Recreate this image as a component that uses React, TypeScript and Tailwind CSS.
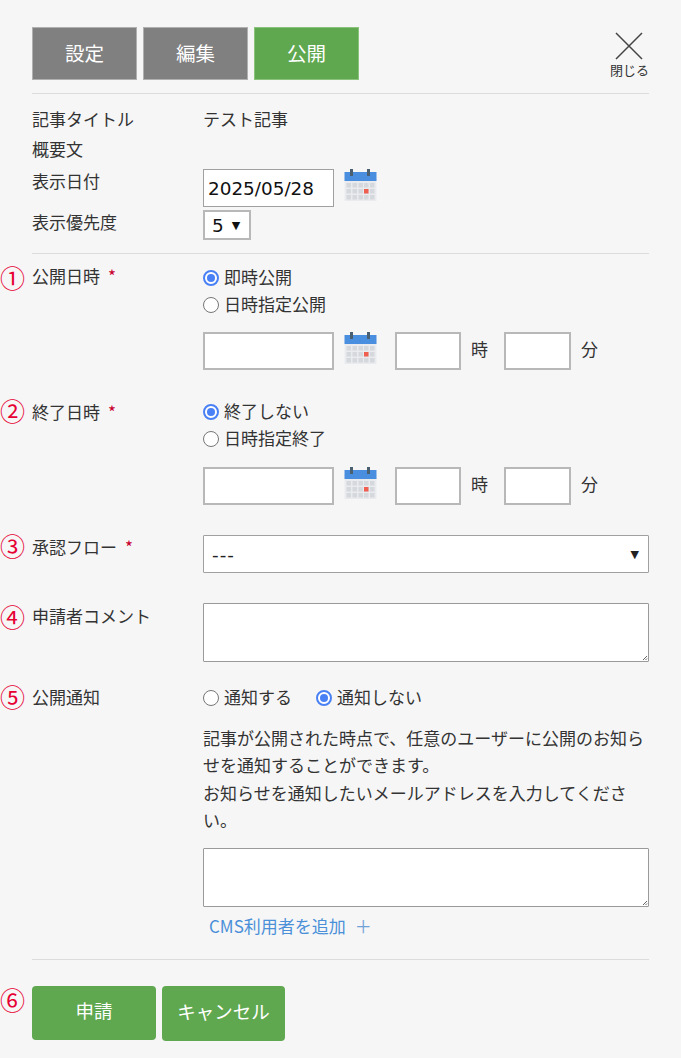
import React from 'react';

const FONT = "font-['Noto_Sans_CJK_JP','Noto_Sans',sans-serif]";
const FIELD_FONT = "font-['DejaVu_Sans',sans-serif]";

function CalendarIcon(): React.ReactNode {
  const cols = [2.5, 8.5, 14.5, 20, 26];
  const rows = [14, 20, 26];
  return (
    <svg width="33" height="33" viewBox="0 0 33 33" className="shrink-0">
      <rect x="0.5" y="8" width="32" height="24" fill="#e9ebee" />
      {rows.map((y) =>
        cols.map((x) => <rect key={`${x}-${y}`} x={x} y={y} width="4.5" height="4.5" fill="#d5d8dc" />)
      )}
      <rect x="0.5" y="3" width="32" height="9" fill="#4a8ee0" />
      <rect x="6" y="0" width="3" height="7" fill="#4a5f70" />
      <rect x="23" y="0" width="3" height="7" fill="#4a5f70" />
      <rect x="20" y="20" width="4.5" height="4.5" fill="#ee5f50" />
    </svg>
  );
}

function Mark({ n, className }: { n: string; className: string }): React.ReactNode {
  return <span className={`absolute -left-[32px] text-[25px] leading-[30px] text-[#e60033] ${className}`}>{n}</span>;
}

function Required(): React.ReactNode {
  return <span className="ml-2 text-[#c8002d]">*</span>;
}

function Radio({ checked, label }: { checked?: boolean; label: string }): React.ReactNode {
  return (
    <label className="flex items-center gap-[5px]">
      {checked ? (
        <span className="flex h-4 w-4 items-center justify-center rounded-full border-2 border-[#4a80f5] bg-white">
          <span className="h-2 w-2 rounded-full bg-[#4a80f5]" />
        </span>
      ) : (
        <span className="h-4 w-4 rounded-full border-[1.5px] border-[#767676] bg-white" />
      )}
      <span className="-translate-y-px">{label}</span>
    </label>
  );
}

function DateTimeInputs({ className }: { className: string }): React.ReactNode {
  return (
    <div className={`flex items-start ${className}`}>
      <div className="h-[38px] w-[131px] border-2 border-[#b8b8b8] bg-white" />
      <div className="ml-[10px]">
        <CalendarIcon />
      </div>
      <div className="ml-[18px] h-[38px] w-[66px] border-2 border-[#b8b8b8] bg-white" />
      <span className="ml-[10px] mt-[3px] w-[33px]">時</span>
      <div className="h-[38px] w-[67px] border-2 border-[#b8b8b8] bg-white" />
      <span className="ml-[10px] mt-[3px]">分</span>
    </div>
  );
}

function Row({ label, mark, markClass, labelClass, required, className, children }: {
  label: string;
  mark?: string;
  markClass?: string;
  labelClass?: string;
  required?: boolean;
  className?: string;
  children?: React.ReactNode;
}): React.ReactNode {
  return (
    <div className={`relative flex ${className ?? ''}`}>
      {mark && <Mark n={mark} className={markClass ?? ''} />}
      <div className={`w-[171px] shrink-0 ${labelClass ?? ''}`}>
        {label}
        {required && <Required />}
      </div>
      <div className="min-w-0 flex-1">{children}</div>
    </div>
  );
}

function Textarea(): React.ReactNode {
  return (
    <div className="relative h-[59px] w-full rounded-[1px] border border-[#9a9a9a] bg-white">
      <svg width="6" height="6" viewBox="0 0 6 6" className="absolute bottom-0 right-0">
        <path d="M1 5L5 1M3.5 5L5 3.5" stroke="#666" strokeWidth="1" />
      </svg>
    </div>
  );
}

export default function App(): React.ReactNode {
  return (
    <div className={`h-[1058px] w-[681px] overflow-hidden bg-[#f6f6f6] pl-8 pr-8 pt-[27px] text-[17px] leading-[27px] text-[#333] ${FONT}`}>
      <div className="flex items-start justify-between border-b border-[#dcdcdc] pb-[13px]">
        <div className="flex gap-[6px] text-[19.5px] text-white">
          <div className="flex h-[53px] w-[105px] items-center justify-center border border-[#b0b0b0] bg-[#808080] pb-[3px]">設定</div>
          <div className="flex h-[53px] w-[105px] items-center justify-center border border-[#b0b0b0] bg-[#808080] pb-[3px]">編集</div>
          <div className="flex h-[53px] w-[105px] items-center justify-center border border-[#8cc37c] bg-[#5fa850] pb-[3px]">公開</div>
        </div>
        <div className="flex flex-col items-center pt-[4px]">
          <svg width="30" height="30" viewBox="0 0 30 30">
            <path d="M2 2L28 28M28 2L2 28" stroke="#444" strokeWidth="1.5" />
          </svg>
          <span className="text-[13px] leading-[18px]">閉じる</span>
        </div>
      </div>

      <div className="border-b border-[#dcdcdc] pb-[13px] pt-[11px]">
        <Row label="記事タイトル">テスト記事</Row>
        <Row label="概要文" className="mt-[3px]" />
        <Row label="表示日付" labelClass="mt-[1px]" className="mt-[4px]">
          <div className="mt-[3px] flex items-start">
            <div className={`flex h-[38px] w-[131px] items-center border border-[#a0a0a0] bg-white pl-[4px] text-[18.4px] text-[#111] ${FIELD_FONT}`}>2025/05/28</div>
            <div className="ml-[10px]"><CalendarIcon /></div>
          </div>
        </Row>
        <Row label="表示優先度" labelClass="-mt-[2px]" className="mt-[3px]">
          <div className={`flex h-[30px] w-[48px] items-center border-2 border-[#b8b8b8] bg-white pl-[7px] text-[18.4px] text-[#111] ${FIELD_FONT}`}>
            5<span className="ml-[8px] text-[11px]">▼</span>
          </div>
        </Row>
      </div>

      <Row label="公開日時" mark="①" markClass="-top-[2px]" labelClass="-mt-[2px]" required className="mt-[10px]">
        <Radio checked label="即時公開" />
        <Radio label="日時指定公開" />
        <DateTimeInputs className="mt-[14px]" />
      </Row>

      <Row label="終了日時" mark="②" markClass="-top-[3px]" required className="mt-[28px]">
        <Radio checked label="終了しない" />
        <Radio label="日時指定終了" />
        <DateTimeInputs className="mt-[15px]" />
      </Row>

      <Row label="承認フロー" mark="③" markClass="-top-[5px]" labelClass="-mt-[2px]" required className="mt-[30px]">
        <div className={`flex h-[38px] items-center justify-between rounded-[1px] border-[1.5px] border-[#a0a0a0] bg-white pl-[8px] pr-[8px] text-[18.4px] tracking-[1px] text-[#222] ${FIELD_FONT}`}>
          ---<span className="text-[11px]">▼</span>
        </div>
      </Row>

      <Row label="申請者コメント" mark="④" markClass="-top-[2px]" labelClass="-mt-[1px]" className="mt-[30px]">
        <Textarea />
      </Row>

      <Row label="公開通知" mark="⑤" markClass="-top-[3px]" labelClass="-mt-[1px]" className="mt-[22px]">
        <div className="flex gap-[24px]">
          <Radio label="通知する" />
          <Radio checked label="通知しない" />
        </div>
        <p className="mt-[13px] leading-[27.3px]">
          記事が公開された時点で、任意のユーザーに公開のお知らせを通知することができます。<br />
          お知らせを通知したいメールアドレスを入力してください。
        </p>
        <div className="mt-[15px]"><Textarea /></div>
        <div className="mt-[5px] pl-[6px] text-[#4a90d9]">
          CMS利用者を追加<span className="ml-[9px] text-[#6fa3d8]">＋</span>
        </div>
      </Row>

      <div className="relative mt-[20px] border-t border-[#dcdcdc] pt-[26px]">
        <div className="relative flex items-start gap-[6px] text-[18.5px] text-white">
          <Mark n="⑥" className="-top-[2px]" />
          <div className="flex h-[54px] w-[124px] items-center justify-center rounded-[4px] bg-[#5fa850] pb-[6px]">申請</div>
          <div className="flex h-[55px] w-[123px] items-center justify-center rounded-[4px] bg-[#5fa850] pb-[4px]">キャンセル</div>
        </div>
      </div>
    </div>
  );
}
